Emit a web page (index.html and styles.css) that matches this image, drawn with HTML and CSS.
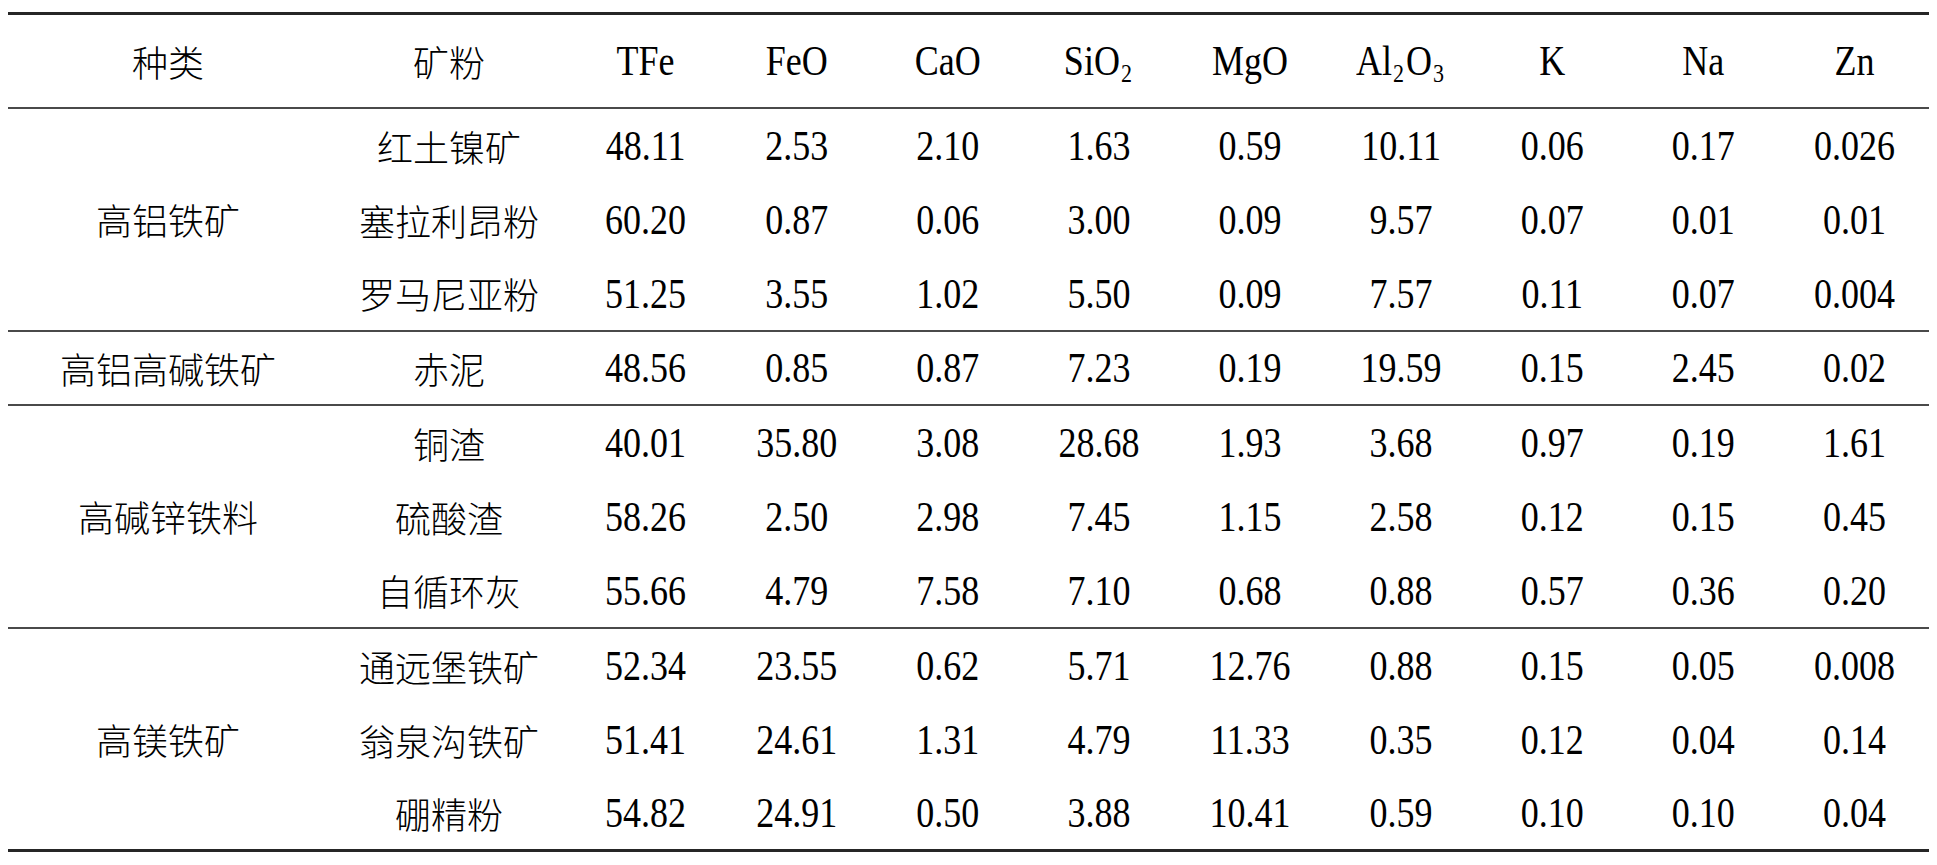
FILE: index.html
```html
<!DOCTYPE html>
<html lang="zh-CN">
<head>
<meta charset="utf-8">
<title>矿粉化学成分</title>
<link rel="stylesheet" href="styles.css">
</head>
<body>
<table class="ore">
  <colgroup>
    <col class="c-kind">
    <col class="c-ore">
    <col><col><col><col><col><col><col><col><col>
  </colgroup>
  <thead>
    <tr>
      <th><span class="c">种类</span></th>
      <th><span class="c">矿粉</span></th>
      <th><span class="n">TFe</span></th>
      <th><span class="n">FeO</span></th>
      <th><span class="n">CaO</span></th>
      <th><span class="n">SiO<sub>2</sub></span></th>
      <th><span class="n">MgO</span></th>
      <th><span class="n">Al<sub>2</sub>O<sub>3</sub></span></th>
      <th><span class="n">K</span></th>
      <th><span class="n">Na</span></th>
      <th><span class="n">Zn</span></th>
    </tr>
  </thead>
  <tbody>
    <tr>
      <td rowspan="3" class="kind end"><span class="c">高铝铁矿</span></td>
      <td><span class="c">红土镍矿</span></td>
      <td><span class="n">48.11</span></td><td><span class="n">2.53</span></td><td><span class="n">2.10</span></td><td><span class="n">1.63</span></td><td><span class="n">0.59</span></td><td><span class="n">10.11</span></td><td><span class="n">0.06</span></td><td><span class="n">0.17</span></td><td><span class="n">0.026</span></td>
    </tr>
    <tr>
      <td><span class="c">塞拉利昂粉</span></td>
      <td><span class="n">60.20</span></td><td><span class="n">0.87</span></td><td><span class="n">0.06</span></td><td><span class="n">3.00</span></td><td><span class="n">0.09</span></td><td><span class="n">9.57</span></td><td><span class="n">0.07</span></td><td><span class="n">0.01</span></td><td><span class="n">0.01</span></td>
    </tr>
    <tr class="last tall">
      <td><span class="c">罗马尼亚粉</span></td>
      <td><span class="n">51.25</span></td><td><span class="n">3.55</span></td><td><span class="n">1.02</span></td><td><span class="n">5.50</span></td><td><span class="n">0.09</span></td><td><span class="n">7.57</span></td><td><span class="n">0.11</span></td><td><span class="n">0.07</span></td><td><span class="n">0.004</span></td>
    </tr>
  </tbody>
  <tbody>
    <tr class="last">
      <td class="kind end"><span class="c">高铝高碱铁矿</span></td>
      <td><span class="c">赤泥</span></td>
      <td><span class="n">48.56</span></td><td><span class="n">0.85</span></td><td><span class="n">0.87</span></td><td><span class="n">7.23</span></td><td><span class="n">0.19</span></td><td><span class="n">19.59</span></td><td><span class="n">0.15</span></td><td><span class="n">2.45</span></td><td><span class="n">0.02</span></td>
    </tr>
  </tbody>
  <tbody>
    <tr>
      <td rowspan="3" class="kind end"><span class="c">高碱锌铁料</span></td>
      <td><span class="c">铜渣</span></td>
      <td><span class="n">40.01</span></td><td><span class="n">35.80</span></td><td><span class="n">3.08</span></td><td><span class="n">28.68</span></td><td><span class="n">1.93</span></td><td><span class="n">3.68</span></td><td><span class="n">0.97</span></td><td><span class="n">0.19</span></td><td><span class="n">1.61</span></td>
    </tr>
    <tr>
      <td><span class="c">硫酸渣</span></td>
      <td><span class="n">58.26</span></td><td><span class="n">2.50</span></td><td><span class="n">2.98</span></td><td><span class="n">7.45</span></td><td><span class="n">1.15</span></td><td><span class="n">2.58</span></td><td><span class="n">0.12</span></td><td><span class="n">0.15</span></td><td><span class="n">0.45</span></td>
    </tr>
    <tr class="last tall">
      <td><span class="c">自循环灰</span></td>
      <td><span class="n">55.66</span></td><td><span class="n">4.79</span></td><td><span class="n">7.58</span></td><td><span class="n">7.10</span></td><td><span class="n">0.68</span></td><td><span class="n">0.88</span></td><td><span class="n">0.57</span></td><td><span class="n">0.36</span></td><td><span class="n">0.20</span></td>
    </tr>
  </tbody>
  <tbody class="final">
    <tr>
      <td rowspan="3" class="kind end"><span class="c">高镁铁矿</span></td>
      <td><span class="c">通远堡铁矿</span></td>
      <td><span class="n">52.34</span></td><td><span class="n">23.55</span></td><td><span class="n">0.62</span></td><td><span class="n">5.71</span></td><td><span class="n">12.76</span></td><td><span class="n">0.88</span></td><td><span class="n">0.15</span></td><td><span class="n">0.05</span></td><td><span class="n">0.008</span></td>
    </tr>
    <tr>
      <td><span class="c">翁泉沟铁矿</span></td>
      <td><span class="n">51.41</span></td><td><span class="n">24.61</span></td><td><span class="n">1.31</span></td><td><span class="n">4.79</span></td><td><span class="n">11.33</span></td><td><span class="n">0.35</span></td><td><span class="n">0.12</span></td><td><span class="n">0.04</span></td><td><span class="n">0.14</span></td>
    </tr>
    <tr class="last tall">
      <td><span class="c">硼精粉</span></td>
      <td><span class="n">54.82</span></td><td><span class="n">24.91</span></td><td><span class="n">0.50</span></td><td><span class="n">3.88</span></td><td><span class="n">10.41</span></td><td><span class="n">0.59</span></td><td><span class="n">0.10</span></td><td><span class="n">0.10</span></td><td><span class="n">0.04</span></td>
    </tr>
  </tbody>
</table>
</body>
</html>
```

FILE: styles.css
```css
html, body {
  background: #ffffff;
}

body {
  margin: 8px;
  color: #000000;
  font-family: "Liberation Serif", "Noto Sans CJK SC", serif;
}

.ore {
  margin-top: 4px;
  width: 1922px;
  table-layout: fixed;
  border-collapse: separate;
  border-spacing: 0;
  border-top: 3px solid #262626;
}

.c-kind { width: 320px; }
.c-ore { width: 242px; }

.ore th,
.ore td {
  padding: 0;
  text-align: center;
  vertical-align: middle;
  font-weight: normal;
  line-height: 1;
  white-space: nowrap;
}

.ore thead th {
  height: 92px;
  border-bottom: 2px solid #4a4a4a;
}

.ore tbody tr { height: 74px; }
.ore tbody tr.tall { height: 75px; }

.ore tr.last td,
.ore td.end {
  border-bottom: 2px solid #4a4a4a;
}

.ore tbody.final tr.last td,
.ore tbody.final td.end {
  border-bottom: 3px solid #262626;
}

.n {
  display: inline-block;
  font-family: "Liberation Serif", serif;
  font-size: 36px;
  transform: scaleY(1.16);
}

.n sub {
  font-size: 22px;
  vertical-align: -6px;
  line-height: 0;
  margin: 0 2px 0 1px;
}

.c {
  display: inline-block;
  font-family: "Noto Sans CJK SC", sans-serif;
  font-size: 36px;
  font-weight: 300;
}
```
